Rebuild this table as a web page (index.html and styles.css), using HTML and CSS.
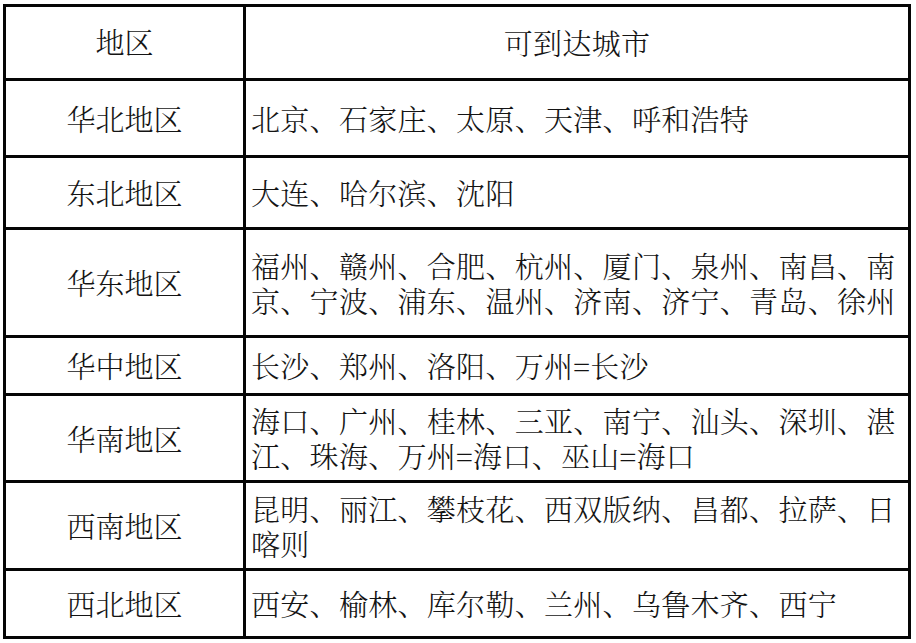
FILE: index.html
```html
<!DOCTYPE html>
<html lang="zh-CN">
<head>
<meta charset="utf-8">
<title>可到达城市</title>
<link rel="stylesheet" href="styles.css">
</head>
<body>
<div class="table">
  <div class="cell region head">地区</div>
  <div class="cell cities center head">可到达城市</div>

  <div class="cell region">华北地区</div>
  <div class="cell cities">北京、石家庄、太原、天津、呼和浩特</div>

  <div class="cell region">东北地区</div>
  <div class="cell cities">大连、哈尔滨、沈阳</div>

  <div class="cell region">华东地区</div>
  <div class="cell cities">福州、赣州、合肥、杭州、厦门、泉州、南昌、南京、宁波、浦东、温州、济南、济宁、青岛、徐州</div>

  <div class="cell region">华中地区</div>
  <div class="cell cities">长沙、郑州、洛阳、万州=长沙</div>

  <div class="cell region">华南地区</div>
  <div class="cell cities">海口、广州、桂林、三亚、南宁、汕头、深圳、湛江、珠海、万州=海口、巫山=海口</div>

  <div class="cell region">西南地区</div>
  <div class="cell cities">昆明、丽江、攀枝花、西双版纳、昌都、拉萨、日喀则</div>

  <div class="cell region">西北地区</div>
  <div class="cell cities">西安、榆林、库尔勒、兰州、乌鲁木齐、西宁</div>
</div>
</body>
</html>
```

FILE: styles.css
```css
html, body {
  margin: 0;
  padding: 0;
  background: #ffffff;
}

body {
  padding: 4px 0 0 3px;
  font-family: "Noto Serif CJK SC", "Noto Sans CJK SC", serif;
  font-weight: 300;
  color: #141414;
}

.table {
  width: 908px;
  box-sizing: border-box;
  display: grid;
  grid-template-columns: 240px 665px;
  grid-template-rows: 74px 77px 72px 108px 58px 87px 88px 68px;
  border-top: 3px solid #050505;
  border-left: 3px solid #050505;
}

.cell {
  border-right: 3px solid #050505;
  border-bottom: 3px solid #050505;
  display: flex;
  align-items: center;
  font-size: 29px;
  line-height: 35px;
  min-width: 0;
}

.region {
  justify-content: center;
  text-align: center;
}

.cities {
  padding: 0 2px 0 5px;
  letter-spacing: 0.3px;
  line-break: strict;
}

.cities.center {
  justify-content: center;
  padding: 0;
}

.head {
  padding-bottom: 2px;
}
```
